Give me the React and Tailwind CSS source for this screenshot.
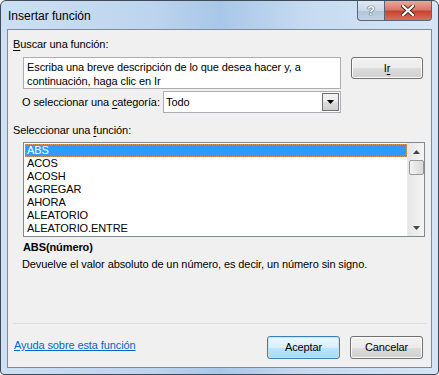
import React from "react";

const font = { fontFamily: '"Liberation Sans", Arial, sans-serif' };

const items = ["ABS", "ACOS", "ACOSH", "AGREGAR", "AHORA", "ALEATORIO", "ALEATORIO.ENTRE"];

function WinButton({ children, def, className = "" }) {
    return (
        <div
            className={
                "flex items-center justify-center rounded-[3px] border text-[11px] text-black " +
                (def
                    ? "border-[#3c7fb1] shadow-[inset_0_0_0_1px_#bfe4f8] bg-[linear-gradient(#eaf6fd_0%,#d9f0fc_50%,#bee6fd_51%,#a7d9f5_100%)] "
                    : "border-[#707070] shadow-[inset_0_0_0_1px_#fcfcfc] bg-[linear-gradient(#f2f2f2_0%,#ebebeb_50%,#dddddd_51%,#cfcfcf_100%)] ") +
                className
            }
        >
            {children}
        </div>
    );
}

export default function App() {
    return (
        <div
            className="w-[439px] h-[375px] rounded-t-[6px] rounded-b-[4px] border border-[#3f4b59] bg-[linear-gradient(90deg,#cde0f4_0%,#bcd4ee_35%,#a8c7e8_50%,#c6dbf1_70%,#d5e5f6_100%)] flex flex-col overflow-hidden"
            style={font}
        >
            {/* title bar */}
            <div className="h-[28px] flex items-start relative">
                <span className="ml-[7px] mt-[8px] text-[12px] leading-[14px] text-black">Insertar función</span>
                <div className="ml-auto mr-[6px] flex">
                    <div className="w-[28px] h-[20px] rounded-bl-[4px] border border-t-0 border-[#56667a] bg-[linear-gradient(#dfe8f2_0%,#c9d7e6_50%,#b2c4d8_51%,#c3d3e4_100%)] flex items-center justify-center">
                        <span className="text-[13px] font-bold text-white leading-none [text-shadow:0_0_1px_#333,0_0_1px_#333]">?</span>
                    </div>
                    <div className="w-[47px] h-[20px] rounded-br-[4px] border border-t-0 border-l-0 border-[#56667a] bg-[linear-gradient(#e9a99c_0%,#d87a68_45%,#c7442e_55%,#d6705d_100%)] flex items-center justify-center">
                        <svg width="14" height="11" viewBox="0 0 14 11">
                            <path d="M2 1 L12 10 M12 1 L2 10" stroke="#3a2a2a" strokeWidth="4" strokeLinecap="square" />
                            <path d="M2 1 L12 10 M12 1 L2 10" stroke="#ffffff" strokeWidth="2.2" strokeLinecap="square" />
                        </svg>
                    </div>
                </div>
            </div>

            {/* content */}
            <div className="mx-[6px] mb-[6px] flex-1 border border-[#7f8b99] bg-[#f0f0f0] flex flex-col text-[11px] tracking-[-0.1px] text-black leading-[13px]">
                <div className="ml-[5px] mt-[8px]">
                    <span className="underline underline-offset-2">B</span>uscar una función:
                </div>

                <div className="flex mt-[6px] ml-[15px]">
                    <div className="w-[318px] h-[32px] border border-[#abadb3] bg-white pl-[3px] pt-[2px] leading-[14px]">
                        Escriba una breve descripción de lo que desea hacer y, a
                        <br />
                        continuación, haga clic en Ir
                    </div>
                    <WinButton className="ml-[10px] w-[72px] h-[22px]">
                        I<span className="underline underline-offset-2">r</span>
                    </WinButton>
                </div>

                <div className="flex items-center mt-[2px] ml-[14px]">
                    <span className="w-[141px] pt-[1px]">
                        O seleccionar una <span className="underline underline-offset-2">c</span>ategoría:
                    </span>
                    <div className="w-[178px] h-[22px] border border-[#abadb3] bg-white flex items-center">
                        <span className="pl-[2px] pt-[1px] flex-1">Todo</span>
                        <div className="w-[17px] h-[18px] mr-[1px] border border-[#707070] bg-[linear-gradient(#f2f2f2_0%,#ebebeb_50%,#dddddd_51%,#cfcfcf_100%)] flex items-center justify-center">
                            <svg width="7" height="4" viewBox="0 0 7 4">
                                <path d="M0 0 H7 L3.5 4 Z" fill="#000" />
                            </svg>
                        </div>
                    </div>
                </div>

                <div className="ml-[5px] mt-[11px]">
                    Seleccionar una <span className="underline underline-offset-2">f</span>unción:
                </div>

                <div className="ml-[15px] mt-[5px] w-[402px] h-[95px] border border-[#828790] bg-white flex">
                    <div className="flex-1 pt-[1px] pl-[1px]">
                        {items.map((it, i) => (
                            <div
                                key={it}
                                className={
                                    "h-[13px] leading-[13px] pl-[2px] " +
                                    (i === 0 ? "bg-[#3399ff] text-white outline-1 outline-dotted outline-[#d7955a] -outline-offset-1" : "")
                                }
                            >
                                {it}
                            </div>
                        ))}
                    </div>
                    <div className="w-[17px] bg-[linear-gradient(90deg,#e6e6e6,#f4f4f4)] border-l border-[#ececec] flex flex-col items-center">
                        <div className="h-[17px] flex items-center justify-center">
                            <svg width="7" height="4" viewBox="0 0 7 4">
                                <path d="M0 4 H7 L3.5 0 Z" fill="#444" />
                            </svg>
                        </div>
                        <div className="w-[15px] h-[15px] rounded-[2px] border border-[#979797] bg-[linear-gradient(90deg,#f3f3f3,#d8d8d8)]" />
                        <div className="flex-1" />
                        <div className="h-[17px] flex items-center justify-center">
                            <svg width="7" height="4" viewBox="0 0 7 4">
                                <path d="M0 0 H7 L3.5 4 Z" fill="#444" />
                            </svg>
                        </div>
                    </div>
                </div>

                <div className="ml-[15px] mt-[4px] font-bold">ABS(número)</div>
                <div className="ml-[14px] mt-[4px]">
                    Devuelve el valor absoluto de un número, es decir, un número sin signo.
                </div>

                <div className="flex-1" />
                <div className="mx-[5px] h-px bg-[#d5dfe5]" />

                <div className="flex items-center mt-[12px] mb-[8px]">
                    <span className="ml-[6px] mb-[4px] text-[#0066cc] underline underline-offset-1">Ayuda sobre esta función</span>
                    <WinButton def className="ml-auto w-[73px] h-[23px]">Aceptar</WinButton>
                    <WinButton className="ml-[10px] mr-[8px] w-[73px] h-[23px]">Cancelar</WinButton>
                </div>
            </div>
        </div>
    );
}
